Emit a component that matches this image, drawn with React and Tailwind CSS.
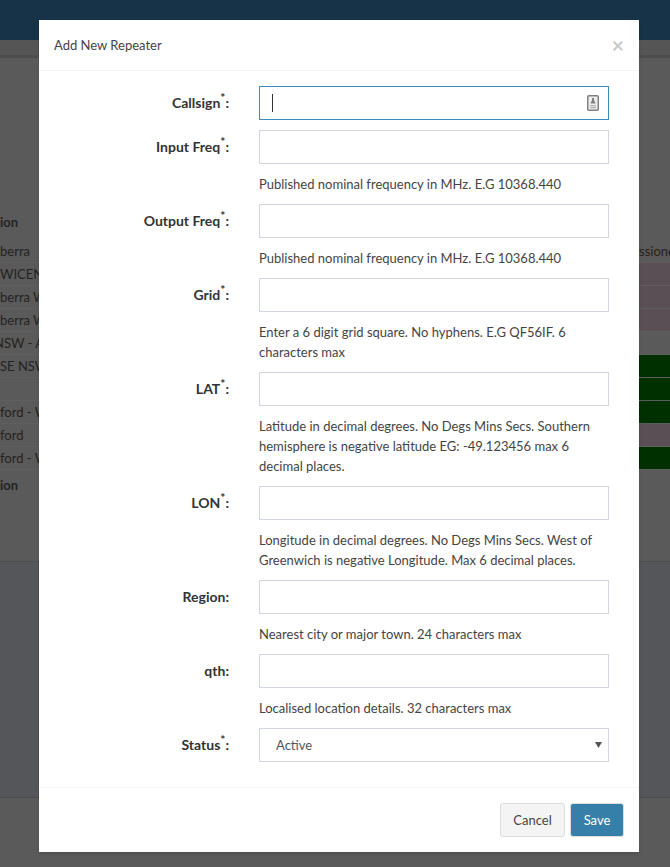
import React from "react";

const bgRows = [
  { text: "berra", status: "text" },
  { text: "WICEN", status: "pink" },
  { text: "berra W", status: "pink" },
  { text: "berra W", status: "pink" },
  { text: "NSW - AC", status: "none", cut: true },
  { text: "SE NSW", status: "green" },
  { text: "", status: "green" },
  { text: "ford - W", status: "green" },
  { text: "ford", status: "pink" },
  { text: "ford - W", status: "green" },
];

const fields = [
  { label: "Input Freq", req: true, help: ["Published nominal frequency in MHz. E.G 10368.440"] },
  { label: "Output Freq", req: true, help: ["Published nominal frequency in MHz. E.G 10368.440"] },
  { label: "Grid", req: true, help: ["Enter a 6 digit grid square. No hyphens. E.G QF56IF. 6", "characters max"] },
  {
    label: "LAT",
    req: true,
    help: [
      "Latitude in decimal degrees. No Degs Mins Secs. Southern",
      "hemisphere is negative latitude EG: -49.123456 max 6",
      "decimal places.",
    ],
  },
  {
    label: "LON",
    req: true,
    help: ["Longitude in decimal degrees. No Degs Mins Secs. West of", "Greenwich is negative Longitude. Max 6 decimal places."],
  },
  { label: "Region", help: ["Nearest city or major town. 24 characters max"] },
  { label: "qth", help: ["Localised location details. 32 characters max"] },
];

function Label({ label, req }) {
  return (
    <label className="text-right font-bold text-sm leading-[34px] text-[#333]">
      {label}
      {req && <sup className="text-xs font-bold">*</sup>}:
    </label>
  );
}

function Field({ label, req, help }) {
  return (
    <>
      <Label label={label} req={req} />
      <div className="mb-[10px]">
        <input className="block w-full h-[34px] border border-[#d2d6de] bg-white px-3 outline-none" />
        <div className="mt-[10px] text-[13px] leading-[20px] text-[#444]">
          {help.map((line) => (
            <div key={line} className="whitespace-nowrap">
              {line}
            </div>
          ))}
        </div>
      </div>
    </>
  );
}

function Background() {
  return (
    <div className="h-[867px] overflow-hidden bg-[#5a5a5a] text-[13px] text-[#232323]">
      <div className="h-10 bg-[#163347]" />
      <div className="h-[15px] bg-[#555555]" />
      <div className="h-[3px] bg-[#4d4d4d]" />
      <div className="h-[153px]" />
      <div className="flex h-[23px] items-center font-bold">ion</div>
      <div className="h-[6px]" />
      {bgRows.map((row, i) => (
        <div key={i} className="flex h-[23px] items-center justify-between border-b border-[#5f5f5f]">
          <span className={row.cut ? "-ml-[6px] pt-px" : "pt-px"}>{row.text}</span>
          {row.status === "text" && <span className="w-[31px] overflow-hidden whitespace-nowrap pt-px">ssioned</span>}
          {row.status === "pink" && <span className="h-full w-[31px] bg-[#5a4f55]" />}
          {row.status === "green" && <span className="h-full w-[31px] bg-[#003000]" />}
        </div>
      ))}
      <div className="flex h-[30px] items-center pt-px font-bold">ion</div>
      <div className="h-[61px]" />
      <div className="h-[236px] border-t border-[#4d4d4d] bg-[#555659]" />
      <div className="border-t border-[#4d4d4d]" />
    </div>
  );
}

export default function App() {
  return (
    <div className="relative h-[867px] overflow-hidden" style={{ fontFamily: 'Lato, sans-serif' }}>
      <Background />

      {/* modal */}
      <div className="absolute left-[39px] top-5 w-[600px] bg-white shadow-[0_2px_3px_rgba(0,0,0,0.125)]">
        <div className="flex items-center justify-between border-b border-[#f4f4f4] p-[15px]">
          <h4 className="text-[13px] leading-5 text-[#444]">Add New Repeater</h4>
          <button className="text-[21px] font-bold leading-5 text-[#c9c9c9]">×</button>
        </div>

        <div className="p-[15px]">
          <div className="grid grid-cols-[175px_350px] gap-x-[30px]">
            <Label label="Callsign" req />
            <div className="relative mb-[10px]">
              <input className="block w-full h-[34px] border border-[#3c8dbc] bg-white px-3 outline-none" />
              <span className="absolute left-[13px] top-2 h-[18px] w-px bg-[#333]" />
              <svg className="absolute right-[10px] top-[9px]" width="12" height="16" viewBox="0 0 12 16">
                <rect x="0.75" y="0.75" width="10.5" height="14.5" rx="1" fill="#eee" stroke="#808080" strokeWidth="1.5" />
                <rect x="5" y="3" width="2" height="2" fill="#808080" />
                <path d="M5 5 H7 L8.5 8.5 H3.5 Z" fill="#808080" />
                <rect x="3" y="10" width="6" height="1.2" fill="#b0b0b0" />
                <rect x="3" y="12" width="6" height="1.2" fill="#b0b0b0" />
              </svg>
            </div>

            {fields.map((f) => (
              <Field key={f.label} {...f} />
            ))}

            <Label label="Status" req />
            <div className="relative mb-[10px]">
              <select
                defaultValue="Active"
                className="block w-full h-[34px] appearance-none border border-[#d2d6de] bg-white pl-4 pt-px text-[13px] text-[#555] outline-none"
              >
                <option>Active</option>
              </select>
              <svg className="absolute right-[7px] top-[14px]" width="7" height="7" viewBox="0 0 7 7">
                <path d="M0 0 H7 L3.5 6 Z" fill="#555" />
              </svg>
            </div>
          </div>
        </div>

        <div className="flex justify-end gap-[5px] border-t border-[#f4f4f4] p-[15px]">
          <button className="h-[34px] w-[65px] rounded-[3px] border border-[#ddd] bg-[#f4f4f4] pt-px text-[13px] text-[#444]">Cancel</button>
          <button className="h-[34px] w-[54px] rounded-[3px] border border-[#ddd] bg-[#367fa9] pt-px text-[13px] text-white">Save</button>
        </div>
      </div>
    </div>
  );
}
